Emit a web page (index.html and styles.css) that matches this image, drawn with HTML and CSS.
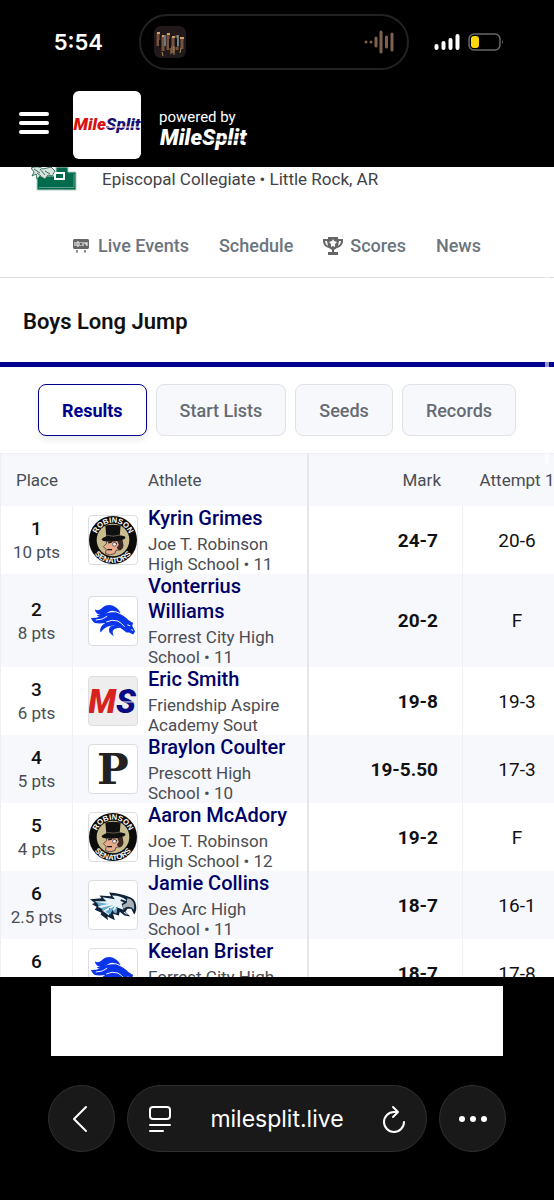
FILE: index.html
```html
<!DOCTYPE html>
<html lang="en">
<head>
    <meta charset="UTF-8">
    <meta name="viewport" content="width=device-width, initial-scale=1.0">
    <title>Boys Long Jump - MileSplit Live</title>
    <link rel="stylesheet" href="styles.css">
</head>
<body>
    <!-- Shared team logos -->
    <svg class="symbols" aria-hidden="true">
        <symbol id="senators" viewBox="0 0 50 50">
            <circle cx="25" cy="25" r="25" fill="#0b0b0b"/>
            <circle cx="25" cy="25" r="17" fill="#c9bd90"/>
            <path id="arcTop" d="M7 25 A18 18 0 0 1 43 25" fill="none"/>
            <path id="arcBottom" d="M1 25 A24 24 0 0 0 49 25" fill="none"/>
            <text class="seal-text"><textPath href="#arcTop" startOffset="50%" text-anchor="middle">ROBINSON</textPath></text>
            <text class="seal-text"><textPath href="#arcBottom" startOffset="50%" text-anchor="middle">SENATORS</textPath></text>
            <path d="M19 24 L31 24 L33 30 Q34 35 28 36 L27 39 Q22 42 17 39 L18 35 L15 32 L18 29 Z" fill="#e9ab8e" stroke="#222" stroke-width=".7"/>
            <path d="M29 25 L35 25 L36 31 Q35 36 31 36 L29 33 L31 30 Z" fill="#3b2a24"/>
            <path d="M20 28 L24 27 M26 28 L29 29 M19 35 L24 35" stroke="#111" stroke-width="1.2"/>
            <circle cx="26.500" cy="29.500" r="2" fill="#eee" stroke="#222" stroke-width=".6"/>
            <path d="M17 10 Q25 8 33 10 L32 20 L37 21 Q40 23 34 25 Q25 28 15 26 Q10 24 18 21 Z" fill="#101010"/>
            <path d="M18 20 Q25 22 32 20" stroke="#77705c" stroke-width=".8" fill="none"/>
        </symbol>
        <symbol id="mustang" viewBox="0 0 50 50">
            <g fill="#0a35ea">
                <path d="M6 13 Q10 15 13 12 Q18 7 25 9 Q31 12 33 17 Q26 13 21 15 Q15 20 10 18 Q7 17 6 13Z"/>
                <path d="M2 22 Q8 22 12 20 Q19 15 28 16 Q36 19 41 24 L46 27 L45 30 L48 36 L46 39 L42 37 L39 37 L34 33 Q29 29 23 30 Q16 31 12 37 Q10 31 17 27 Q10 28 6 27 Q3 25 2 22Z"/>
                <path d="M33 32 Q27 32 25 35 Q24 37 26 41 Q18 36 22 31 Q27 28 33 32Z"/>
                <path d="M14 17 Q11 19 8 19 Q12 23 18 18Z"/>
            </g>
            <path d="M7 24 Q14 24 19 20 M18 26 Q24 23 30 25 Q34 27 37 31" stroke="#fff" stroke-width="1" fill="none"/>
            <path d="M40 29 L43 30 M44 34 L46 35" stroke="#fff" stroke-width="1"/>
        </symbol>
    </svg>

    <header class="top">
        <div class="status">
            <span class="clock">5:54</span>
            <div class="island">
                <svg class="album" viewBox="0 0 32 32" aria-hidden="true">
                    <rect width="32" height="32" rx="7" fill="#21191a"/>
                    <path d="M4 7v13M9 10v15M14 8v16M19 11v16M23 9v15M28 11v12" stroke="#77523c" stroke-width="3"/>
                    <path d="M11 9v11M24 9v11" stroke="#7694a2" stroke-width="1.500"/>
                    <path d="M3 7h3M8 10h2M13 8h3M18 11h3M26 12h4" stroke="#d49b68" stroke-width="2"/>
                    <path d="M8 26l1 4M17 20v8M20 20v9M27 22l-1 5" stroke="#a98a58" stroke-width="1"/>
                    <path d="M6 14v8M16 13v9M22 12v9" stroke="#101014" stroke-width="2"/>
                </svg>
                <svg class="wave" viewBox="0 0 30 24" aria-hidden="true">
                    <path d="M2 12v.1M7 12v.1M12 8v8M17 2v20M22.500 7v10M28 4v16" stroke="#80604e" stroke-width="3" stroke-linecap="round"/>
                </svg>
            </div>
            <div class="signals">
                <svg width="26" height="18" viewBox="0 0 26 18" aria-hidden="true">
                    <path d="M2.500 13v2M9.500 10v5M16.500 7v8M23.500 3v12" stroke="#fff" stroke-width="4" stroke-linecap="round"/>
                </svg>
                <svg width="36" height="18" viewBox="0 0 36 18" aria-hidden="true">
                    <rect x="1" y="1" width="31" height="16" rx="5" fill="none" stroke="#68686b" stroke-width="1.500"/>
                    <rect x="3" y="3" width="8" height="12" rx="3" fill="#ffd60a"/>
                    <path d="M34 7q2 2 0 4z" fill="#68686b"/>
                </svg>
            </div>
        </div>
        <div class="brand-bar">
            <button class="menu" aria-label="Menu"><span></span><span></span><span></span></button>
            <a class="tile" href="#" aria-label="MileSplit">
                <svg viewBox="0 0 68 28" class="tile-logo">
                    <text x="34" y="19" text-anchor="middle" class="logo-text"><tspan fill="#d9100f">Mile</tspan><tspan fill="#1a0f70">Split</tspan></text>
                    <path d="M34 16h34" stroke="#fff" stroke-width="1"/>
                </svg>
            </a>
            <div class="powered">
                <span>powered by</span>
                <svg viewBox="0 0 90 28" class="powered-logo" aria-hidden="true">
                    <text x="1" y="19" class="logo-text logo-large" fill="#fff">MileSplit</text>
                    <path d="M45 14h44" stroke="#000" stroke-width="1"/>
                </svg>
            </div>
        </div>
    </header>

    <main class="page">
        <div class="host">
            <svg class="host-logo" viewBox="0 0 46 24" aria-hidden="true">
                <path d="M6 9h19V0h12v5h8v18H6z" fill="#006b4c" stroke="#b3cec5" stroke-width="1"/>
                <path d="M8 20.500h35V7" fill="none" stroke="#5a9f89" stroke-width="1"/>
                <path d="M24 6h9v6h-9z" fill="#006b4c" stroke="#fff" stroke-width="2"/>
                <path d="M0 1Q7-2 12 2L20 0 24 4 21 9 17 8 14 12 9 9 6 12 5 7 1 9 3 5Z" fill="#d9e2de" stroke="#37755f" stroke-width="1"/>
                <path d="M3 2l6 4M9 2l5 6M14 4l5 3M6 6l4 3" stroke="#37755f" stroke-width="1"/>
            </svg>
            <span>Episcopal Collegiate • Little Rock, AR</span>
        </div>

        <nav class="meet-nav">
            <a href="#">
                <svg width="16" height="14" viewBox="0 0 16 14" aria-hidden="true">
                    <path d="M1 0h14l1 1v8l-1 1H1L0 9V1z" fill="#666"/>
                    <path d="M2 3v4M4 3h2v4H4zM8 3v1M8 6v1M10 3v4M12 3v2h2M14 3v4" stroke="#fff" stroke-width="1" fill="none"/>
                    <path d="M3 12h2M11 12h2M4 11v3M12 11v3" stroke="#666" stroke-width="1"/>
                </svg>
                Live Events
            </a>
            <a href="#">Schedule</a>
            <a href="#" class="scores">
                <svg width="20" height="18" viewBox="0 0 20 18" aria-hidden="true">
                    <path d="M5 0h10v2h5v3q-1 5-6 6l-3 2v2h4v3H5v-3h4v-2l-3-2Q1 10 0 5V2h5zM2 4q0 3 3 5L4 4zm14 0-1 5q3-2 3-5z" fill="#666" fill-rule="evenodd"/>
                    <path d="M10 2l1 2 3 1-2 2v3l-2-1-2 1V7L6 5l3-1z" fill="#fff"/>
                </svg>
                Scores
            </a>
            <a href="#">News</a>
        </nav>

        <h1 class="event-title">Boys Long Jump</h1>

        <div class="tabs">
            <button class="tab active">Results</button>
            <button class="tab">Start Lists</button>
            <button class="tab">Seeds</button>
            <button class="tab">Records</button>
        </div>

        <table class="results">
            <colgroup>
                <col class="col-place">
                <col class="col-athlete">
                <col class="col-mark">
                <col>
            </colgroup>
            <thead>
                <tr>
                    <th>Place</th>
                    <th class="athlete-head">Athlete</th>
                    <th class="mark-head">Mark</th>
                    <th>Attempt 1</th>
                </tr>
            </thead>
            <tbody>
                <tr>
                    <td class="place"><b>1</b><span>10 pts</span></td>
                    <td class="athlete"><div class="row">
                        <svg class="team" viewBox="0 0 50 50"><use href="#senators"/></svg>
                        <div class="info"><a href="#">Kyrin Grimes</a><p>Joe T. Robinson High School • 11</p></div>
                    </div></td>
                    <td class="mark">24-7</td>
                    <td class="attempt">20-6</td>
                </tr>
                <tr>
                    <td class="place"><b>2</b><span>8 pts</span></td>
                    <td class="athlete"><div class="row">
                        <svg class="team" viewBox="0 0 50 50"><use href="#mustang"/></svg>
                        <div class="info"><a href="#">Vonterrius Williams</a><p>Forrest City High School • 11</p></div>
                    </div></td>
                    <td class="mark">20-2</td>
                    <td class="attempt">F</td>
                </tr>
                <tr>
                    <td class="place"><b>3</b><span>6 pts</span></td>
                    <td class="athlete"><div class="row">
                        <svg class="team team-gray" viewBox="0 0 50 50">
                            <text x="24" y="37" text-anchor="middle" class="ms-text"><tspan fill="#d8221d">M</tspan><tspan fill="#0b0b83">S</tspan></text>
                            <path d="M29 26h17" stroke="#eee" stroke-width="1"/>
                        </svg>
                        <div class="info"><a href="#">Eric Smith</a><p>Friendship Aspire Academy Sout</p></div>
                    </div></td>
                    <td class="mark">19-8</td>
                    <td class="attempt">19-3</td>
                </tr>
                <tr>
                    <td class="place"><b>4</b><span>5 pts</span></td>
                    <td class="athlete"><div class="row">
                        <svg class="team" viewBox="0 0 50 50">
                            <text x="25" y="41" text-anchor="middle" class="p-text">P</text>
                        </svg>
                        <div class="info"><a href="#">Braylon Coulter</a><p>Prescott High School • 10</p></div>
                    </div></td>
                    <td class="mark">19-5.50</td>
                    <td class="attempt">17-3</td>
                </tr>
                <tr>
                    <td class="place"><b>5</b><span>4 pts</span></td>
                    <td class="athlete"><div class="row">
                        <svg class="team" viewBox="0 0 50 50"><use href="#senators"/></svg>
                        <div class="info"><a href="#">Aaron McAdory</a><p>Joe T. Robinson High School • 12</p></div>
                    </div></td>
                    <td class="mark">19-2</td>
                    <td class="attempt">F</td>
                </tr>
                <tr>
                    <td class="place"><b>6</b><span>2.5 pts</span></td>
                    <td class="athlete"><div class="row">
                        <svg class="team" viewBox="0 0 50 50">
                            <path d="M1 19L13 18 11 15 23 16 21 12Q33 13 40 16 48 18 49 25 50 31 47 35L44 29 40 29 38 32 43 37 37 36 32 32 31 36 25 34 27 41 19 37 20 41 12 35 13 33 6 30 8 27 3 24 6 23Z" fill="#10233b"/>
                            <path d="M6 21L18 21 14 17 27 19 24 15Q34 15 39 20L34 24 36 30 28 27 29 33 21 28 21 36 14 31 15 29 9 27 12 25Z" fill="#e8f3f7"/>
                            <path d="M8 22l12 2-10 2zM12 28l13-3-10 6zM17 32l10-6-5 9zM25 32l5-6-2 8z" fill="#67abd0"/>
                            <path d="M40 18Q48 19 47 30 44 26 39 27L36 29 35 25 39 23Z" fill="#a9b2b9"/>
                            <path d="M33 20l6 2" stroke="#10233b" stroke-width="2"/>
                            <path d="M37 32l4 3-2 0-3-2z" fill="#c9d1d5"/>
                        </svg>
                        <div class="info"><a href="#">Jamie Collins</a><p>Des Arc High School • 11</p></div>
                    </div></td>
                    <td class="mark">18-7</td>
                    <td class="attempt">16-1</td>
                </tr>
                <tr>
                    <td class="place"><b>6</b><span>2.5 pts</span></td>
                    <td class="athlete"><div class="row">
                        <svg class="team" viewBox="0 0 50 50"><use href="#mustang"/></svg>
                        <div class="info"><a href="#">Keelan Brister</a><p>Forrest City High School</p></div>
                    </div></td>
                    <td class="mark">18-7</td>
                    <td class="attempt">17-8</td>
                </tr>
            </tbody>
        </table>
        <span class="scroll-thumb"></span>
    </main>

    <footer class="bottom">
        <div class="ad"></div>
        <div class="browser-bar">
            <button class="round" aria-label="Back">
                <svg width="20" height="28" viewBox="0 0 20 28"><path d="M14 2L2 14l12 12" fill="none" stroke="#fff" stroke-width="2" stroke-linecap="round" stroke-linejoin="round"/></svg>
            </button>
            <div class="address">
                <button aria-label="Page menu">
                    <svg width="24" height="28" viewBox="0 0 24 28"><rect x="2" y="2" width="20" height="12" rx="3" fill="none" stroke="#fff" stroke-width="2"/><path d="M2 20h20M2 26h13" stroke="#fff" stroke-width="2" stroke-linecap="round"/></svg>
                </button>
                <button class="url">milesplit.live</button>
                <button aria-label="Reload">
                    <svg width="24" height="28" viewBox="0 0 24 28"><path d="M15 7h-3a10 10 0 1 0 10 10M11 2l5 5-5 5" fill="none" stroke="#fff" stroke-width="2" stroke-linecap="round" stroke-linejoin="round"/></svg>
                </button>
            </div>
            <button class="round" aria-label="More">
                <svg width="28" height="6" viewBox="0 0 28 6" fill="#fff"><circle cx="3" cy="3" r="3"/><circle cx="14" cy="3" r="3"/><circle cx="25" cy="3" r="3"/></svg>
            </button>
        </div>
    </footer>
</body>
</html>
```

FILE: styles.css
```css
* {
    box-sizing: border-box;
}
body {
    margin: 0;
    height: 100vh;
    display: flex;
    flex-direction: column;
    background-color: #000;
    color: #111;
    font-family: Roboto, Arial, sans-serif;
    overflow: hidden;
}
a {
    text-decoration: none;
}
button {
    font-family: inherit;
    padding: 0;
    border: 0;
    background: none;
    cursor: pointer;
}
svg {
    display: block;
}
.symbols {
    position: absolute;
    width: 0;
    height: 0;
}

/* Status bar and brand header */
.top {
    flex: none;
    padding: 14px 0 8px;
}
.status {
    display: grid;
    grid-template-columns: 1fr 270px 1fr;
    align-items: center;
    padding-right: 6px;
}
.clock {
    justify-self: end;
    padding-right: 36px;
    color: #fff;
    font: 600 22px Inter, sans-serif;
}
.island {
    height: 56px;
    padding: 0 13px;
    border: 2px solid #222;
    border-radius: 28px;
    display: flex;
    align-items: center;
    justify-content: space-between;
}
.album {
    width: 32px;
    height: 32px;
}
.wave {
    width: 30px;
    height: 24px;
}
.signals {
    display: flex;
    align-items: center;
    gap: 8px;
    padding-left: 25px;
}
.brand-bar {
    display: flex;
    align-items: center;
    padding: 21px 19px 0;
}
.menu {
    width: 30px;
    margin: 0 24px 4px 0;
    display: flex;
    flex-direction: column;
    gap: 5px;
}
.menu span {
    height: 4px;
    border-radius: 2px;
    background-color: #fff;
}
.tile {
    width: 68px;
    height: 68px;
    border-radius: 6px;
    background-color: #fff;
    display: flex;
    align-items: center;
}
.tile-logo {
    width: 68px;
    height: 28px;
}
.logo-text {
    font: italic 900 17px Roboto, sans-serif;
}
.logo-large {
    font-size: 22px;
}
.powered {
    margin-left: 18px;
    padding-top: 12px;
    color: #fff;
    font-size: 15px;
    line-height: 18px;
}
.powered-logo {
    width: 90px;
    height: 28px;
}

/* Page */
.page {
    position: relative;
    flex: 1;
    min-height: 0;
    overflow: hidden;
    background-color: #fff;
}
.host {
    display: flex;
    gap: 25px;
    padding-left: 31px;
    color: #3f4248;
    font-size: 17px;
    line-height: 24px;
}
.host-logo {
    width: 46px;
    height: 24px;
}
.meet-nav {
    display: flex;
    justify-content: center;
    gap: 30px;
    padding: 43px 0 19px;
    border-bottom: 1px solid #dcdde0;
}
.meet-nav a {
    display: flex;
    align-items: center;
    gap: 9px;
    color: #6c757d;
    font-size: 18px;
    font-weight: 500;
    line-height: 24px;
}
.meet-nav .scores {
    gap: 7px;
}
.event-title {
    margin: 0;
    padding: 30px 23px 26px;
    border-bottom: 5px solid #00008f;
    font-size: 22px;
    font-weight: 600;
    line-height: 28px;
}
.tabs {
    display: flex;
    justify-content: center;
    gap: 9px;
    padding: 17px 0;
}
.tab {
    height: 52px;
    padding: 0 23px;
    border: 1px solid #dfe1e6;
    border-radius: 8px;
    background-color: #f7f8fc;
    color: #666b72;
    font-size: 18px;
    font-weight: 500;
}
.tab.active {
    border-color: #00008f;
    background-color: #fff;
    color: #00008f;
    font-weight: 700;
    box-shadow: 0 4px 6px rgba(0,0,0,0.08);
}

/* Results table */
.results {
    width: 100%;
    min-width: 571px;
    table-layout: fixed;
    border-collapse: separate;
    border-spacing: 0;
    border-top: 1px solid #eeeff2;
    border-left: 1px solid #eeeff2;
}
.col-place {
    width: 72px;
}
.col-athlete {
    width: 236px;
}
.col-mark {
    width: 154px;
}
th {
    height: 52px;
    padding: 0;
    background-color: #f7f8fc;
    color: #4a4d53;
    font-size: 17px;
    font-weight: 400;
}
.results .athlete-head {
    padding-left: 75px;
    text-align: left;
    border-right: 2px solid #e5e6ea;
}
.results .mark-head {
    padding-right: 22px;
    text-align: right;
}
td {
    padding: 0;
}
tbody tr:nth-child(even) {
    background-color: #f7f8fc;
}
.place {
    border-right: 1px solid #eff0f3;
    text-align: center;
}
.place b,
.place span {
    display: block;
}
.place b {
    font-size: 19px;
    font-weight: 500;
    line-height: 24px;
}
.place span {
    color: #4a4d53;
    font-size: 17px;
    line-height: 22px;
}
.athlete {
    border-right: 2px solid #e5e6ea;
}
.row {
    display: flex;
    align-items: center;
    gap: 10px;
    padding: 0 12px 0 15px;
}
.team {
    flex: none;
    width: 50px;
    height: 50px;
    border: 1px solid #dcdde0;
    border-radius: 4px;
    background-color: #fff;
}
.team-gray {
    background-color: #eee;
}
.info a {
    display: block;
    color: #000068;
    font-size: 20px;
    font-weight: 500;
    line-height: 25px;
}
.info p {
    margin: 3px 0 0;
    color: #4a4d53;
    font-size: 17px;
    line-height: 20px;
}
.mark {
    padding-right: 24px;
    border-right: 1px solid #eff0f3;
    text-align: right;
    font-size: 19px;
    font-weight: 700;
}
.attempt {
    text-align: center;
    font-size: 19px;
}
.seal-text {
    fill: #fff;
    font: 700 8px "Liberation Sans", sans-serif;
}
.ms-text {
    font: italic 900 34px Roboto, sans-serif;
}
.p-text {
    fill: #222;
    font: 700 44px "DejaVu Serif", serif;
}
.scroll-thumb {
    position: absolute;
    top: 4px;
    right: 5px;
    width: 4px;
    height: 294px;
    border-radius: 2px;
    background-color: rgba(255,255,255,0.6);
}

/* Ad slot and browser bar */
.bottom {
    flex: none;
    padding: 9px 0 48px;
}
.ad {
    height: 70px;
    margin: 0 51px;
    background-color: #fff;
}
.browser-bar {
    display: flex;
    gap: 12px;
    padding: 29px 48px 0;
}
.round,
.address {
    height: 67px;
    border: 1px solid #303030;
    border-radius: 34px;
    background-color: #191919;
    display: flex;
    align-items: center;
}
.round {
    flex: none;
    width: 67px;
    justify-content: center;
}
.address {
    flex: 1;
    justify-content: space-between;
    padding: 0 20px;
}
.url {
    color: #fff;
    font: 400 23px Inter, sans-serif;
}
```
